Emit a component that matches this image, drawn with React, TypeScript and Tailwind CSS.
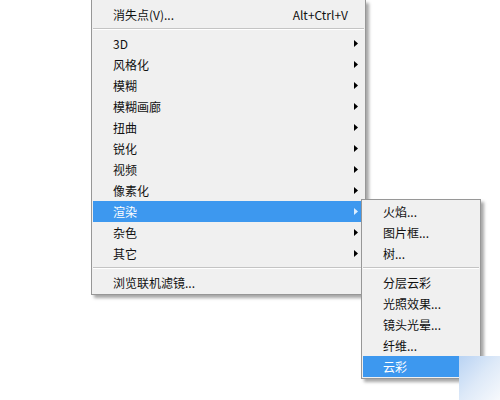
import React from 'react';

type Item = { label?: string; shortcut?: string; sub?: boolean; active?: boolean; sep?: boolean };

const mainItems: Item[] = [
    { label: '消失点(V)...', shortcut: 'Alt+Ctrl+V' },
    { sep: true },
    { label: '3D', sub: true },
    { label: '风格化', sub: true },
    { label: '模糊', sub: true },
    { label: '模糊画廊', sub: true },
    { label: '扭曲', sub: true },
    { label: '锐化', sub: true },
    { label: '视频', sub: true },
    { label: '像素化', sub: true },
    { label: '渲染', sub: true, active: true },
    { label: '杂色', sub: true },
    { label: '其它', sub: true },
    { sep: true },
    { label: '浏览联机滤镜...' },
];

const subItems: Item[] = [
    { label: '火焰...' },
    { label: '图片框...' },
    { label: '树...' },
    { sep: true },
    { label: '分层云彩' },
    { label: '光照效果...' },
    { label: '镜头光晕...' },
    { label: '纤维...' },
    { label: '云彩', active: true },
];

const Arrow: React.FC<{ light?: boolean }> = ({ light }) => (
    <svg width="4" height="7" viewBox="0 0 4 7" className="shrink-0">
        <path d="M0 0 L4 3.5 L0 7 Z" fill={light ? '#dbeeff' : '#000'} />
    </svg>
);

const Separator: React.FC = () => (
    <div className="h-[8px] pt-[3px] px-[1px]">
        <div className="h-px bg-[#c4c4c4] border-b border-white box-content" />
    </div>
);

const Row: React.FC<{ item: Item; arrowPad?: string }> = ({ item }) => (
    <div
        className={
            'h-[21px] mx-[1px] flex items-center pl-[20px] ' +
            (item.active ? 'bg-[#3d98ef] text-white' : 'text-[#111]')
        }
    >
        <span className="flex-1 whitespace-nowrap">{item.label}</span>
        {item.shortcut && <span className="pr-[16px] whitespace-nowrap">{item.shortcut}</span>}
        {item.sub && (
            <span className="pr-[6px] flex items-center">
                <Arrow light={item.active} />
            </span>
        )}
    </div>
);

export default function App() {
    return (
        <div
            className="relative w-[500px] h-[400px] overflow-hidden bg-white text-[12px] leading-none"
            style={{ fontFamily: '"Noto Sans CJK SC", "Liberation Sans", sans-serif' }}
        >
            <div className="ml-[91px] w-[275px] bg-[#f0f0f0] border border-t-0 border-[#979797] pt-[4px] pb-[1px] shadow-[3px_3px_3px_rgba(0,0,0,0.35)]">
                {mainItems.map((it, i) => (it.sep ? <Separator key={i} /> : <Row key={i} item={it} />))}
            </div>

            <div className="absolute left-[361px] top-[199px] w-[120px] bg-[#f0f0f0] border border-[#979797] py-px shadow-[3px_3px_3px_rgba(0,0,0,0.35)]">
                {subItems.map((it, i) => (it.sep ? <Separator key={i} /> : <Row key={i} item={it} />))}
            </div>

            <div className="absolute left-[459px] top-[356px] w-[41px] h-[44px] bg-gradient-to-br from-[#b9d3f3] via-[#dde9f8] to-[#f7f9fc]" />
        </div>
    );
}
